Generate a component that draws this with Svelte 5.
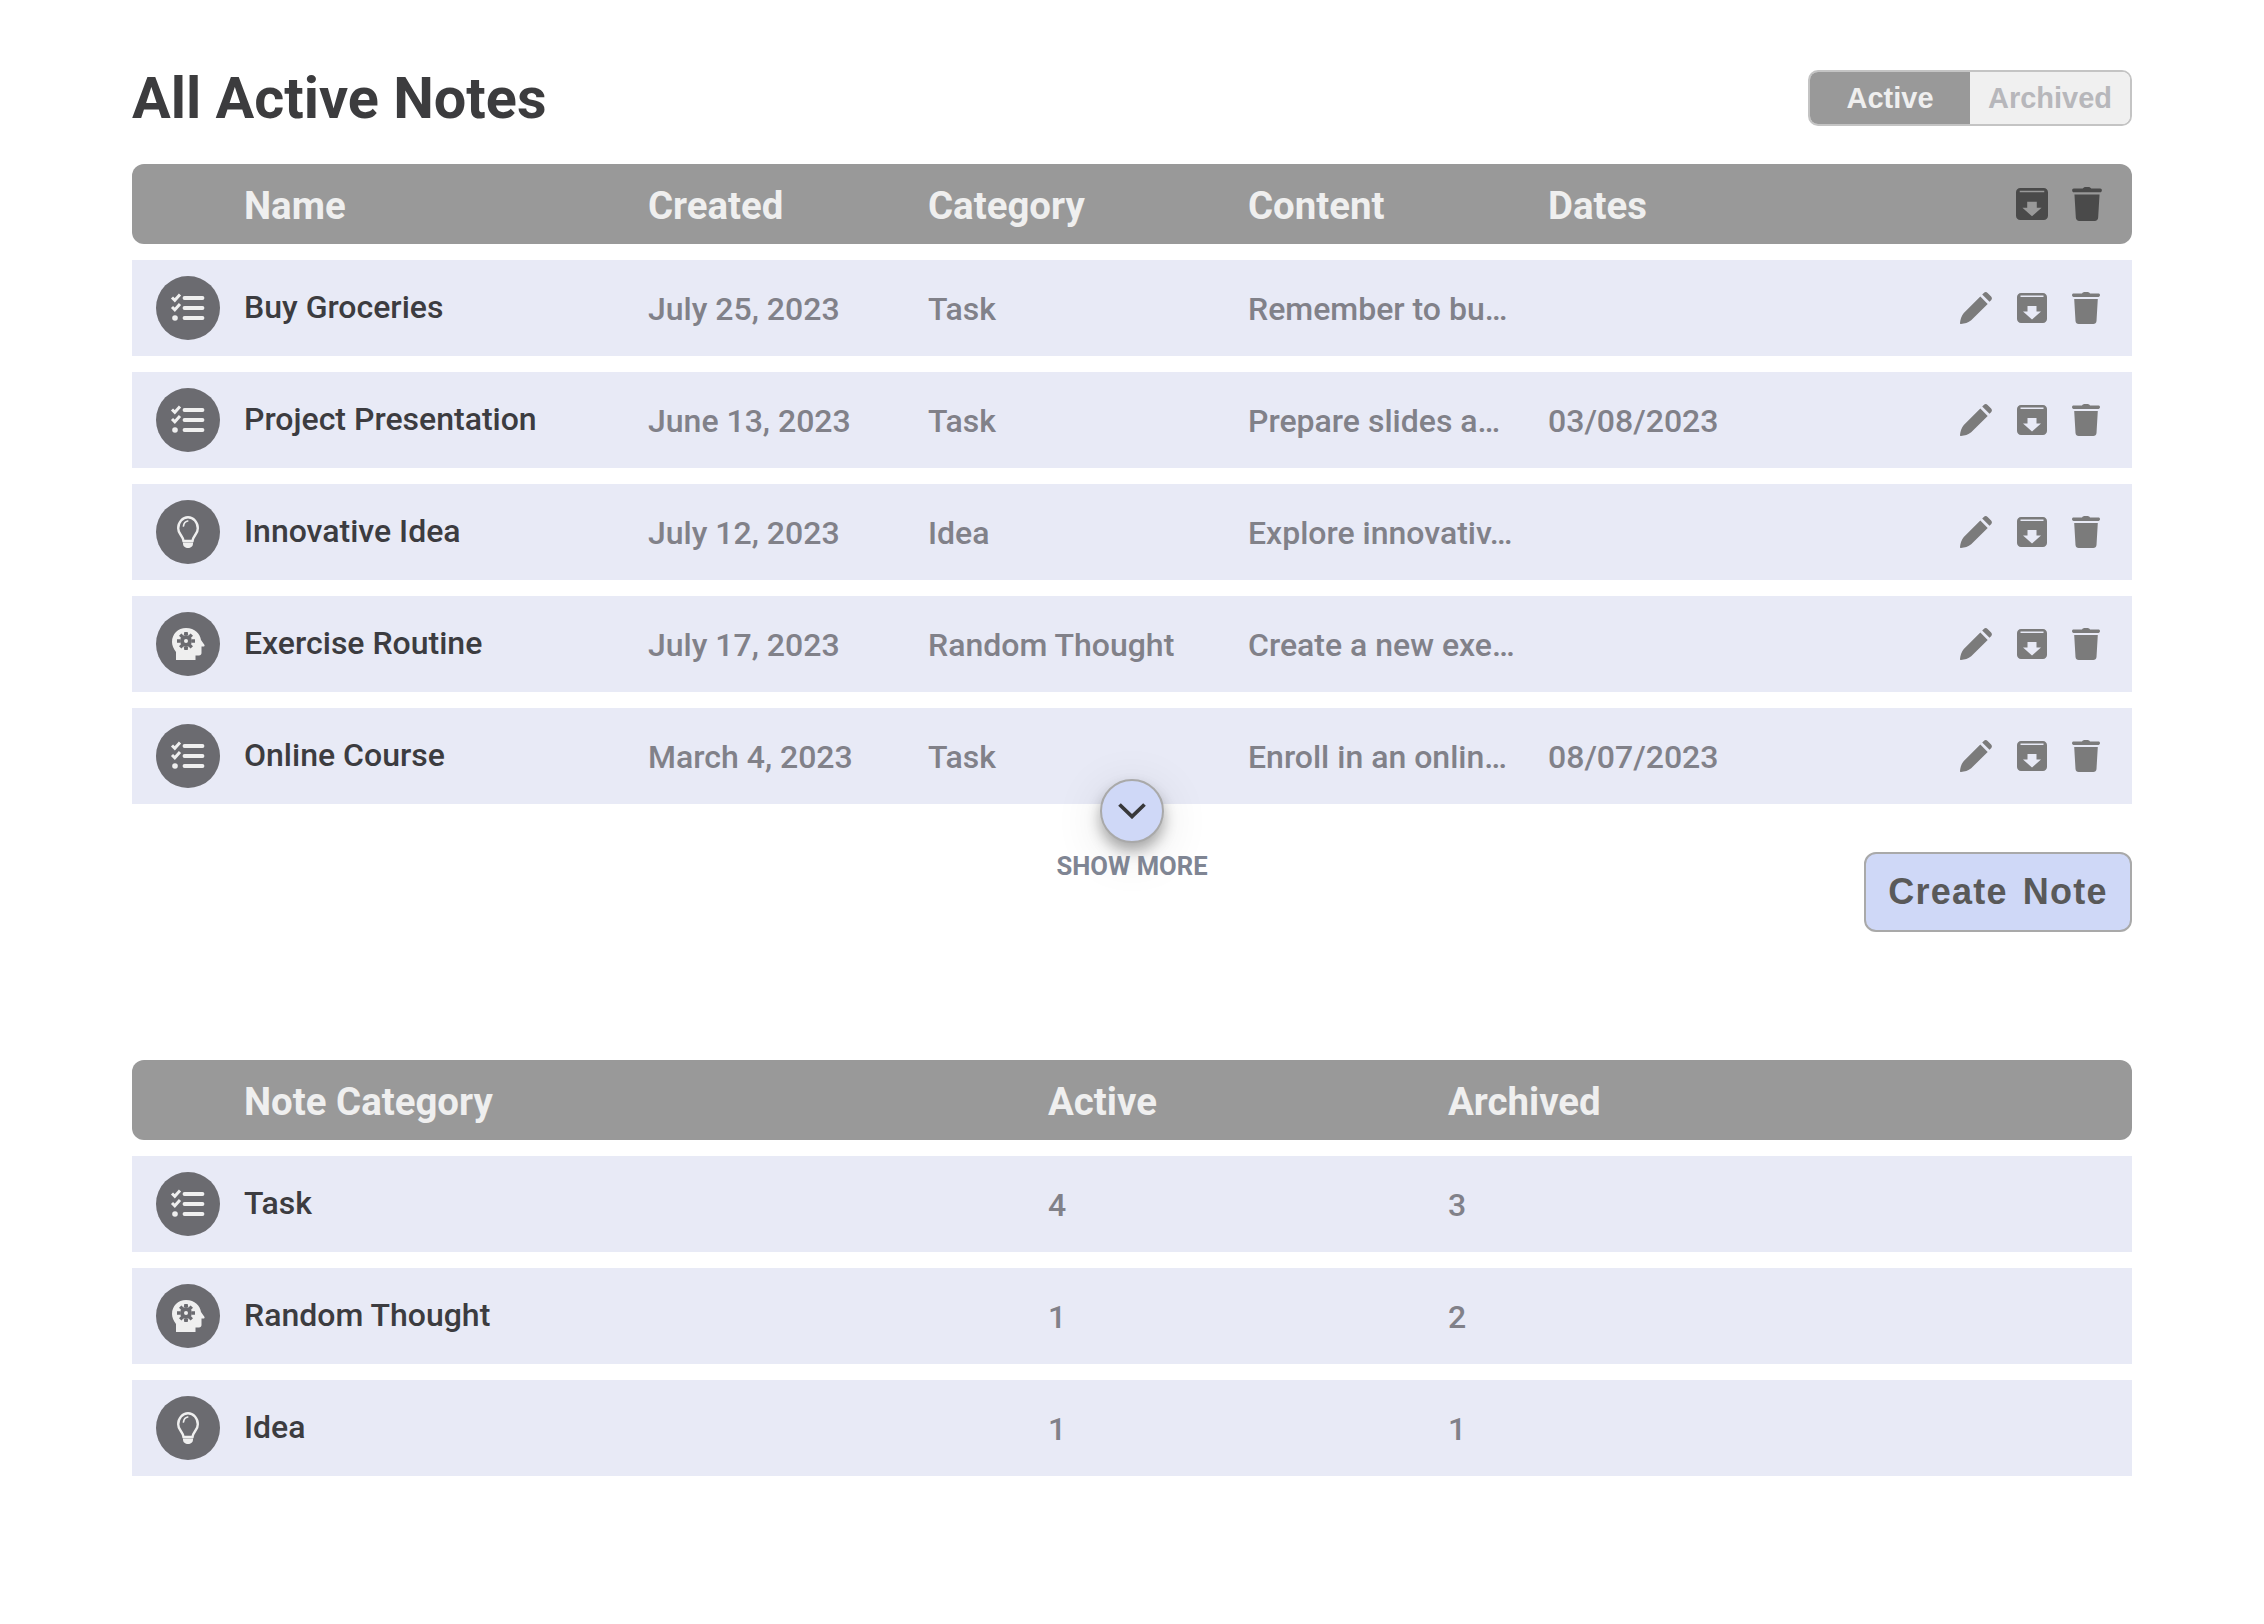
<script>
  const notes = [
    { icon: 'task', name: 'Buy Groceries', created: 'July 25, 2023', category: 'Task', content: 'Remember to bu…', dates: '' },
    { icon: 'task', name: 'Project Presentation', created: 'June 13, 2023', category: 'Task', content: 'Prepare slides a…', dates: '03/08/2023' },
    { icon: 'idea', name: 'Innovative Idea', created: 'July 12, 2023', category: 'Idea', content: 'Explore innovativ…', dates: '' },
    { icon: 'thought', name: 'Exercise Routine', created: 'July 17, 2023', category: 'Random Thought', content: 'Create a new exe…', dates: '' },
    { icon: 'task', name: 'Online Course', created: 'March 4, 2023', category: 'Task', content: 'Enroll in an onlin…', dates: '08/07/2023' }
  ];
  const stats = [
    { icon: 'task', name: 'Task', active: 4, archived: 3 },
    { icon: 'thought', name: 'Random Thought', active: 1, archived: 2 },
    { icon: 'idea', name: 'Idea', active: 1, archived: 1 }
  ];
</script>

{#snippet badge(kind)}
  <span class="badge">
    {#if kind === 'task'}
      <svg viewBox="0 0 64 64" width="64" height="64" class="glyph">
        <path d="M16 21.500l2.800 2.800 5.200-5.800M16 31l2.800 2.800 5.200-5.800" fill="none" stroke="currentColor" stroke-width="3" />
        <circle cx="19" cy="42" r="2.800" fill="currentColor" />
        <path d="M28.500 22h18M28.500 32h18M28.500 42h18" fill="none" stroke="currentColor" stroke-width="3.800" stroke-linecap="round" />
      </svg>
    {:else if kind === 'idea'}
      <svg viewBox="0 0 64 64" width="64" height="64" class="glyph">
        <path d="M27.500 41c-.3-2.800-1.700-4.600-3-6.500-1.400-1.900-2.300-3.900-2.300-6.300 0-6 4.400-11 9.800-11s9.800 5 9.800 11c0 2.400-.9 4.400-2.300 6.300-1.300 1.900-2.700 3.700-3 6.500z" fill="none" stroke="currentColor" stroke-width="2.400" />
        <path d="M27.500 26c.4-2.800 2-4.600 4.200-5" fill="none" stroke="currentColor" stroke-width="1.700" stroke-linecap="round" />
        <path d="M27 42.500h10v1c0 2.800-2.200 4.500-5 4.500s-5-1.700-5-4.500z" fill="currentColor" />
      </svg>
    {:else}
      <svg viewBox="0 0 64 64" width="64" height="64" class="glyph">
        <path fill="currentColor" d="M30 16c9 0 14 6 15 12l3.500 5c.3.800-.2 1.500-1 1.500h-2V41c0 1.500-1 2.500-2.500 2.500h-3.500V48H20v-8c-2.500-3-4-7-4-10 0-8 6-14 14-14z" />
        <g fill="#6b6b70">
          <circle cx="30" cy="29" r="6" />
          <path d="M28.300 20h3.400l.5 3h-4.400zM28.300 38h3.400l.5-3h-4.400zM21 27.300h3v3.400h-3zM39 27.300h-3v3.400h3z" />
          <path d="M23 23.800l2.400-2.400 2.400 2.400-2.400 2.400zM37 23.800l-2.400-2.400-2.400 2.400 2.400 2.400zM23 34.200l2.400 2.400 2.400-2.400-2.400-2.400zM37 34.200l-2.400 2.400-2.400-2.400 2.400-2.400z" />
        </g>
        <circle cx="30" cy="29" r="2" fill="currentColor" />
      </svg>
    {/if}
  </span>
{/snippet}

{#snippet pencil()}
  <svg viewBox="0 0 32 32" width="32" height="32">
    <path fill="currentColor" d="M20.300 4.500l7.400 7.400L11.200 28.300c-2.800 2.300-6.600 3.500-10.200 3.700-.7 0-1-.4-1-1 .3-3.600 1.500-7.300 3.800-10.100zM22.200 2.500l1.600-1.600c1.100-1.100 2.700-1.100 3.800 0l3.500 3.500c1.100 1.100 1.100 2.700 0 3.800l-1.600 1.600z" />
  </svg>
{/snippet}

{#snippet archive(size)}
  <svg viewBox="0 0 30 30" width={size} height={size}>
    <path fill="currentColor" fill-rule="evenodd" d="M4 0h22c2.200 0 4 1.800 4 4v22c0 2.200-1.800 4-4 4H4c-2.200 0-4-1.800-4-4V4c0-2.200 1.800-4 4-4zM3.500 2.500V4h23V2.500zM10.500 13v5.500H6l9 8 9-8h-4.500V13z" />
  </svg>
{/snippet}

{#snippet trash(w, h)}
  <svg viewBox="0 0 28 32" width={w} height={h}>
    <path fill="currentColor" d="M10 1.500C10.500.5 11.500 0 13 0h2c1.500 0 2.500.5 3 1.500h8.500c.8 0 1.500.7 1.500 1.500s-.7 2-1.500 2h-25C.7 5 0 3.800 0 3s.7-1.500 1.500-1.500zM2.200 7h23.600l-1.300 22c-.1 1.700-1.500 3-3.200 3H6.700c-1.700 0-3.100-1.300-3.200-3z" />
  </svg>
{/snippet}

<main class="page">
  <header class="top">
    <h1>All Active Notes</h1>
    <div class="toggle">
      <button class="seg on">Active</button>
      <button class="seg">Archived</button>
    </div>
  </header>

  <section class="list">
    <div class="head notes-grid">
      <span>Name</span>
      <span>Created</span>
      <span>Category</span>
      <span>Content</span>
      <span>Dates</span>
      <span class="head-actions">
        {@render archive(32)}
        {@render trash(30, 34)}
      </span>
    </div>
    {#each notes as n}
      <div class="row notes-grid">
        {@render badge(n.icon)}
        <span class="name">{n.name}</span>
        <span class="cell">{n.created}</span>
        <span class="cell">{n.category}</span>
        <span class="cell">{n.content}</span>
        <span class="cell">{n.dates}</span>
        <span class="actions">
          {@render pencil()}
          {@render archive(30)}
          {@render trash(28, 32)}
        </span>
      </div>
    {/each}
  </section>

  <div class="below">
    <div class="more">
      <button class="more-btn" aria-label="Show more">
        <svg viewBox="0 0 28 16" width="28" height="16">
          <path d="M1.500 1.500L14 13.500 26.500 1.500" fill="none" stroke="#38383a" stroke-width="3.800" />
        </svg>
      </button>
      <span class="more-label">SHOW MORE</span>
    </div>
    <button class="create">Create Note</button>
  </div>

  <section class="list">
    <div class="head stats-grid">
      <span>Note Category</span>
      <span>Active</span>
      <span>Archived</span>
    </div>
    {#each stats as s}
      <div class="row stats-grid">
        {@render badge(s.icon)}
        <span class="name">{s.name}</span>
        <span class="cell">{s.active}</span>
        <span class="cell">{s.archived}</span>
      </div>
    {/each}
  </section>
</main>

<style>
  :global(body) {
    margin: 0;
    background: #fff;
  }
  .page {
    box-sizing: border-box;
    width: 2264px;
    min-height: 1624px;
    padding: 70px 132px 0;
    font-family: Roboto, sans-serif;
  }
  .top {
    display: flex;
    justify-content: space-between;
    align-items: center;
    height: 56px;
    margin-bottom: 38px;
  }
  h1 {
    margin: 0;
    padding-top: 2px;
    font-size: 57.6px;
    font-weight: 700;
    line-height: 56px;
    color: #3c3c3e;
  }
  .toggle {
    box-sizing: border-box;
    display: flex;
    width: 324px;
    height: 56px;
    border: 2px solid #c4c4c4;
    border-radius: 10px;
    overflow: hidden;
  }
  .seg {
    border: 0;
    padding: 0;
    margin: 0;
    font-family: "Liberation Sans", sans-serif;
    font-weight: 700;
    font-size: 29px;
    background: #f0f0f0;
    color: #b7b7bb;
    flex: 1;
  }
  .seg.on {
    background: #999;
    color: #efefef;
    flex: 0 0 160px;
  }
  .list {
    display: flex;
    flex-direction: column;
    gap: 16px;
  }
  .head {
    height: 80px;
    background: #999;
    border-radius: 12px;
    color: #efefef;
    font-weight: 700;
    font-size: 38.4px;
  }
  .head > span {
    padding-top: 2px;
  }
  .head > span:first-child {
    grid-column: 2;
  }
  .notes-grid {
    display: grid;
    grid-template-columns: 88px 404px 280px 320px 300px 1fr auto;
    padding-left: 24px;
    align-items: center;
  }
  .stats-grid {
    display: grid;
    grid-template-columns: 88px 804px 400px 1fr;
    padding-left: 24px;
    align-items: center;
  }
  .head > .head-actions {
    display: flex;
    align-items: center;
    gap: 24px;
    padding: 0 30px 0 0;
    color: #4a4a4a;
    grid-column: 7;
  }
  .row {
    height: 96px;
    background: #e8eaf6;
  }
  .badge {
    display: block;
    width: 64px;
    height: 64px;
    border-radius: 50%;
    background: #6b6b70;
  }
  .glyph {
    display: block;
    color: #efefef;
  }
  .name {
    font-size: 32px;
    font-weight: 500;
    color: #3c3c40;
    margin-top: -2px;
  }
  .cell {
    font-size: 32px;
    font-weight: 500;
    color: #818189;
    padding-top: 1px;
  }
  .actions {
    display: flex;
    align-items: center;
    gap: 25px;
    padding-right: 32px;
    color: #7b7b7b;
    grid-column: 7;
  }
  .actions svg, .head-actions svg {
    display: block;
  }
  .below {
    position: relative;
    display: flex;
    justify-content: flex-end;
    padding: 48px 0 128px;
  }
  .more {
    position: absolute;
    left: 925px;
    top: -26px;
    width: 150px;
    display: flex;
    flex-direction: column;
    align-items: center;
  }
  .more-btn {
    box-sizing: border-box;
    width: 64px;
    height: 64px;
    margin-top: 1px;
    border-radius: 50%;
    border: 2px solid #a9a9a9;
    background: #cfd8f7;
    padding: 0;
    display: flex;
    align-items: center;
    justify-content: center;
    box-shadow: 0 8px 14px rgba(0, 0, 0, 0.3), 0 10px 50px rgba(0, 0, 0, 0.12);
  }
  .more-label {
    margin-top: 3px;
    font-size: 25.6px;
    line-height: 40px;
    font-weight: 700;
    color: #7f8593;
    white-space: nowrap;
  }
  .create {
    box-sizing: border-box;
    width: 268px;
    height: 80px;
    background: #cfd8f7;
    border: 2px solid #a9a9a9;
    border-radius: 12px;
    font-family: "Liberation Sans", sans-serif;
    font-weight: 700;
    font-size: 36px;
    letter-spacing: 1.2px;
    word-spacing: 4px;
    color: #595959;
    padding: 0;
  }
</style>
